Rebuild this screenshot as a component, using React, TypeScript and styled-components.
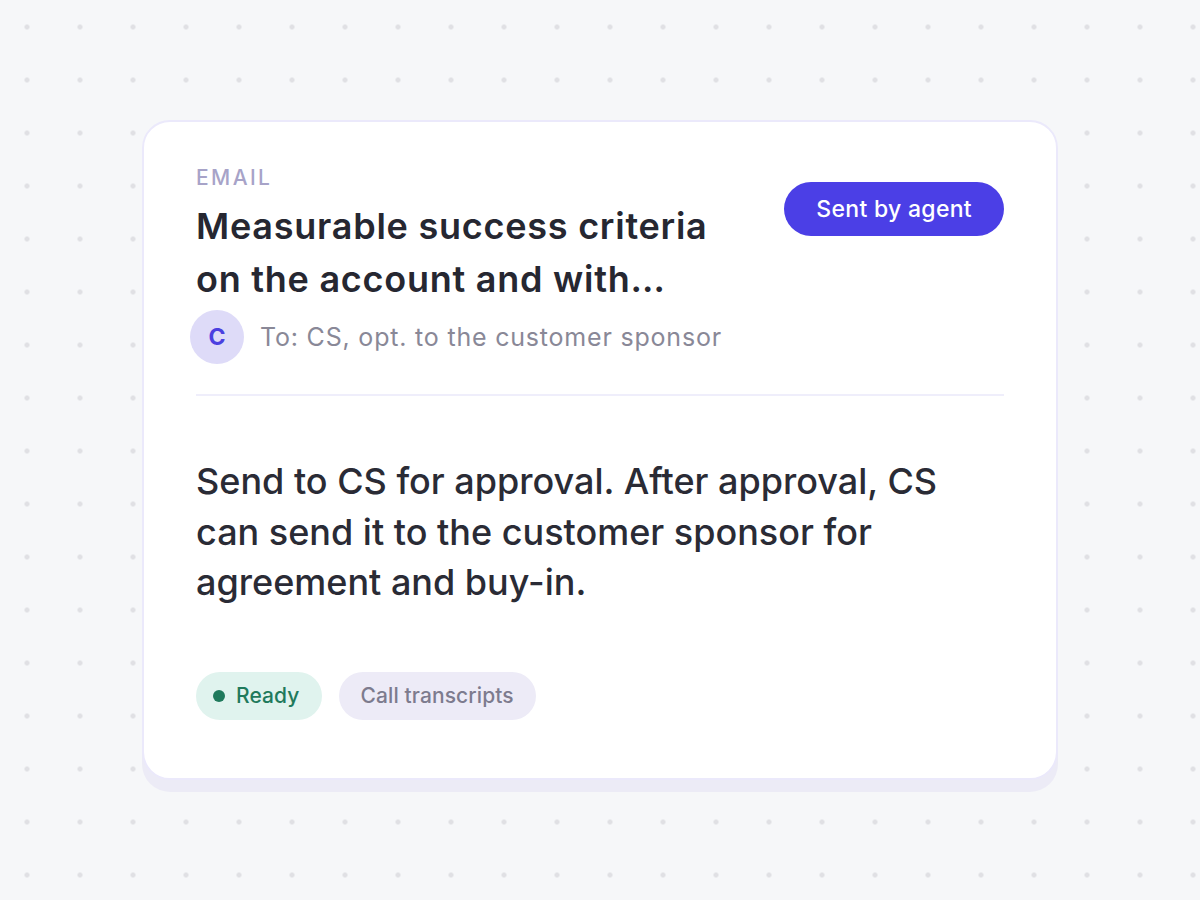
import React from "react";
import styled, { createGlobalStyle } from "styled-components";

const GlobalStyle = createGlobalStyle`
  html, body {
    margin: 0;
    padding: 0;
  }
  body {
    font-family: "Inter", "Noto Sans", sans-serif;
    background-color: #f6f7f9;
  }
`;

const Page = styled.div`
  width: 1200px;
  height: 900px;
  box-sizing: border-box;
  padding: 120px 0 0 142px;
  background-color: #f6f7f9;
  background-image: radial-gradient(circle, #e0e0e4 2.2px, transparent 2.8px);
  background-size: 53px 53px;
  background-position: 0.5px 0.5px;
`;

const Card = styled.div`
  width: 916px;
  box-sizing: border-box;
  padding: 44px 52px 58px 52px;
  background: #fff;
  border: 2px solid #ebe9fb;
  border-radius: 28px;
  box-shadow: 0 12px 0 #ecebf6;
`;

const Header = styled.div`
  display: flex;
  justify-content: space-between;
  align-items: flex-start;
`;

const Kicker = styled.div`
  font-size: 21px;
  font-weight: 500;
  letter-spacing: 2.4px;
  color: #a7a3c8;
  line-height: 24px;
`;

const Title = styled.h2`
  margin: 10px 0 0 0;
  max-width: 530px;
  font-size: 36px;
  font-weight: 600;
  line-height: 53px;
  color: #262731;
  letter-spacing: 0.75px;
`;

const AgentButton = styled.button`
  margin-top: 16px;
  height: 54px;
  padding: 0 32px;
  border: none;
  border-radius: 999px;
  background: #4b3fe6;
  color: #fff;
  font-family: inherit;
  font-size: 23px;
  font-weight: 500;
  letter-spacing: 0.3px;
  cursor: pointer;
`;

const Recipient = styled.div`
  display: flex;
  align-items: center;
  gap: 16px;
  margin: 4px 0 0 -6px;
`;

const Avatar = styled.div`
  width: 54px;
  height: 54px;
  border-radius: 50%;
  background: #dedbf8;
  color: #4b40e0;
  display: flex;
  align-items: center;
  justify-content: center;
  font-size: 23px;
  font-weight: 700;
`;

const RecipientText = styled.span`
  font-size: 25px;
  color: #898897;
  letter-spacing: 0.8px;
`;

const Divider = styled.hr`
  margin: 30px 0 0 0;
  border: none;
  border-top: 2px solid #efeefb;
`;

const Body = styled.p`
  margin: 60px 0 0 0;
  max-width: 770px;
  font-size: 36px;
  font-weight: 500;
  line-height: 50.5px;
  color: #2a2b35;
  letter-spacing: 0;
`;

const Tags = styled.div`
  display: flex;
  gap: 17px;
  margin-top: 64px;
`;

const Tag = styled.span<{ $tone: "green" | "grey" }>`
  display: inline-flex;
  align-items: center;
  gap: 11px;
  height: 48px;
  padding: 0 22px 0 ${(p) => (p.$tone === "green" ? "17px" : "22px")};
  border-radius: 999px;
  font-size: 21px;
  font-weight: 500;
  letter-spacing: 0.1px;
  background: ${(p) => (p.$tone === "green" ? "#e0f3ee" : "#edebf7")};
  color: ${(p) => (p.$tone === "green" ? "#1f7a5c" : "#7d7b8e")};
`;

const Dot = styled.span`
  width: 12px;
  height: 12px;
  border-radius: 50%;
  background: #1f7a5c;
`;

export default function App() {
  return (
    <>
      <GlobalStyle />
      <Page>
        <Card>
          <Header>
            <div>
              <Kicker>EMAIL</Kicker>
              <Title>Measurable success criteria on the account and with…</Title>
            </div>
            <AgentButton>Sent by agent</AgentButton>
          </Header>
          <Recipient>
            <Avatar>C</Avatar>
            <RecipientText>To: CS, opt. to the customer sponsor</RecipientText>
          </Recipient>
          <Divider />
          <Body>
            Send to CS for approval. After approval, CS can send it to the customer sponsor for
            agreement and buy-in.
          </Body>
          <Tags>
            <Tag $tone="green">
              <Dot />
              Ready
            </Tag>
            <Tag $tone="grey">Call transcripts</Tag>
          </Tags>
        </Card>
      </Page>
    </>
  );
}
